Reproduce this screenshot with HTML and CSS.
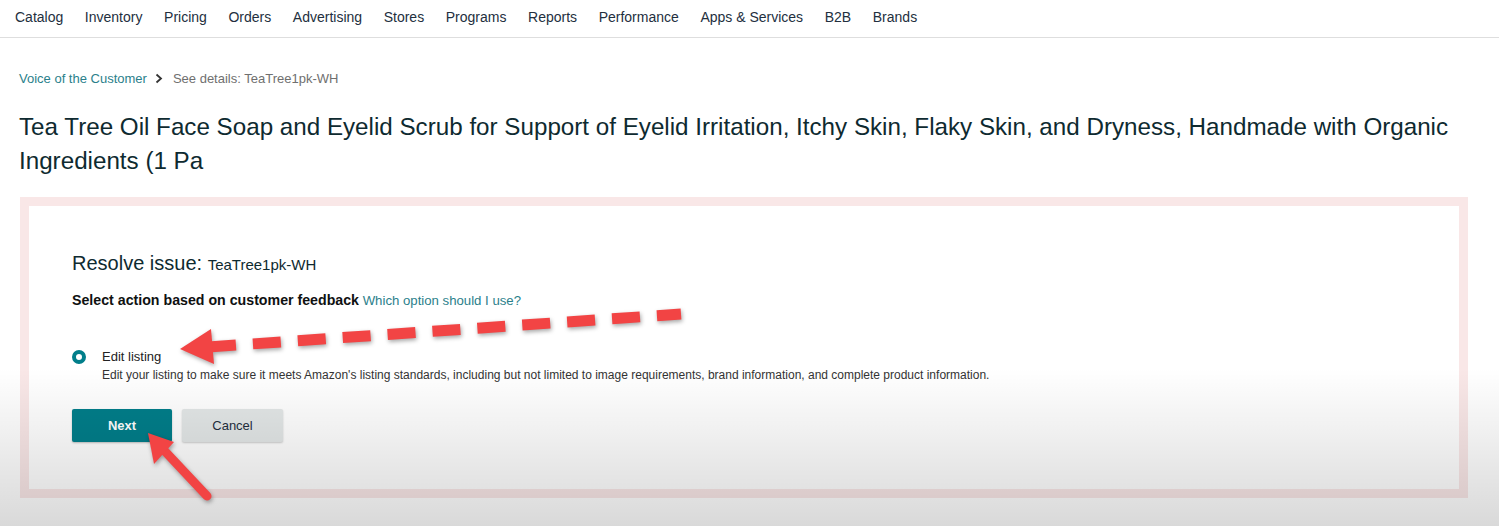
FILE: index.html
```html
<!DOCTYPE html>
<html>
<head>
<meta charset="utf-8">
<link rel="stylesheet" href="styles.css">
</head>
<body>
<nav class="topnav">
  <a>Catalog</a><a>Inventory</a><a>Pricing</a><a>Orders</a><a>Advertising</a><a>Stores</a><a>Programs</a><a>Reports</a><a>Performance</a><a>Apps &amp; Services</a><a>B2B</a><a>Brands</a>
</nav>
<main class="page">
  <div class="crumbs">
    <a class="crumb-link">Voice of the Customer</a>
    <svg class="chev" width="8" height="11" viewBox="0 0 8 11"><path d="M1.5 1.5 L6 5.5 L1.5 9.5" fill="none" stroke="#333" stroke-width="1.8"/></svg>
    <span class="crumb-current">See details: TeaTree1pk-WH</span>
  </div>
  <h1 class="title">Tea Tree Oil Face Soap and Eyelid Scrub for Support of Eyelid Irritation, Itchy Skin, Flaky Skin, and Dryness, Handmade with Organic Ingredients (1 Pa</h1>
  <section class="frame">
    <div class="panel">
      <h2 class="resolve">Resolve issue: <span class="sku">TeaTree1pk-WH</span></h2>
      <p class="select"><b>Select action based on customer feedback</b> <a class="link">Which option should I use?</a></p>
      <div class="option">
        <span class="radio"></span>
        <div class="opt-text">
          <div class="opt-title">Edit listing</div>
          <div class="opt-desc">Edit your listing to make sure it meets Amazon's listing standards, including but not limited to image requirements, brand information, and complete product information.</div>
        </div>
      </div>
      <div class="buttons">
        <button class="btn primary">Next</button>
        <button class="btn secondary">Cancel</button>
      </div>
    </div>
  </section>
</main>
<div class="shade"></div>
<svg class="arrows" width="1499" height="526" viewBox="0 0 1499 526">
  <g fill="#f24444" stroke="none">
    <line x1="208" y1="347" x2="681" y2="314" stroke="#f24444" stroke-width="11" stroke-dasharray="28 17" stroke-linecap="butt"/>
    <polygon points="180,349 211,329 214,364"/>
    <line x1="207" y1="496" x2="160" y2="446" stroke="#f24444" stroke-width="9" stroke-linecap="round"/>
    <polygon points="148,433 174,442 154,464"/>
  </g>
</svg>
</body>
</html>
```
FILE: styles.css
```css
html, body {
  margin: 0;
  padding: 0;
  background: #ffffff;
  font-family: "Liberation Sans", Arial, sans-serif;
  color: #0f1111;
}
body {
  width: 1499px;
  height: 526px;
  overflow: hidden;
  position: relative;
}
.topnav {
  display: flex;
  gap: 21.6px;
  height: 37px;
  align-items: center;
  padding: 0 0 0 15px;
  border-bottom: 1px solid #dedede;
  font-size: 14px;
  color: #232f3e;
  box-sizing: content-box;
}
.topnav a {
  position: relative;
  top: -2px;
}
.page {
  padding: 0 31px 0 19px;
}
.crumbs {
  display: flex;
  align-items: center;
  gap: 8.5px;
  margin-top: 32px;
  height: 16px;
  font-size: 13px;
}
.crumb-link {
  color: #2b7f8b;
}
.chev {
  margin: 0 1px 0 0;
}
.crumb-current {
  color: #6f6f6f;
}
.title {
  margin: 24px -20px 0 0;
  font-size: 24.2px;
  font-weight: normal;
  line-height: 33.5px;
  color: #0e2a30;
}
.frame {
  margin: 20px 0 0 1px;
  border: 9px solid #f9e7e7;
  height: 283px;
}
.panel {
  background: #ffffff;
  height: 100%;
  padding: 45px 0 0 43px;
  box-sizing: border-box;
}
.resolve {
  margin: 0;
  font-size: 20px;
  font-weight: normal;
  line-height: 24px;
  color: #0e2a30;
}
.sku {
  font-size: 15px;
}
.select {
  margin: 14px 0 0 0;
  font-size: 13.2px;
  line-height: 18px;
  color: #0f1111;
}
.select b {
  font-size: 14.2px;
}
.link {
  color: #2b7f8b;
}
.option {
  display: flex;
  gap: 16px;
  margin-top: 38px;
}
.radio {
  flex: none;
  width: 14px;
  height: 14px;
  border-radius: 50%;
  border: 4px solid #017e8a;
  box-sizing: border-box;
  margin-top: 2px;
  background: #fff;
}
.opt-title {
  font-size: 13px;
  line-height: 18px;
  color: #222;
}
.opt-desc {
  font-size: 12px;
  line-height: 18px;
  color: #333;
}
.buttons {
  display: flex;
  gap: 10px;
  margin-top: 25px;
}
.btn {
  height: 33px;
  width: 100px;
  border: none;
  border-radius: 2px;
  font-family: "Liberation Sans", Arial, sans-serif;
  font-size: 13px;
  cursor: pointer;
}
.primary {
  background: #017e8a;
  color: #ffffff;
  font-weight: bold;
  box-shadow: 0 1px 2px rgba(0,0,0,0.25);
}
.secondary {
  width: 101px;
  background: #e3e7e7;
  color: #232f3e;
  box-shadow: 0 1px 2px rgba(0,0,0,0.2);
}
.shade {
  position: absolute;
  left: 0;
  top: 0;
  width: 1499px;
  height: 526px;
  pointer-events: none;
  background: linear-gradient(to bottom, rgba(0,0,0,0) 0%, rgba(0,0,0,0) 70%, rgba(0,0,0,0.06) 82%, rgba(0,0,0,0.15) 100%);
}
.arrows {
  position: absolute;
  left: 0;
  top: 0;
  pointer-events: none;
  filter: drop-shadow(1px 2px 2px rgba(0,0,0,0.35));
}
```
